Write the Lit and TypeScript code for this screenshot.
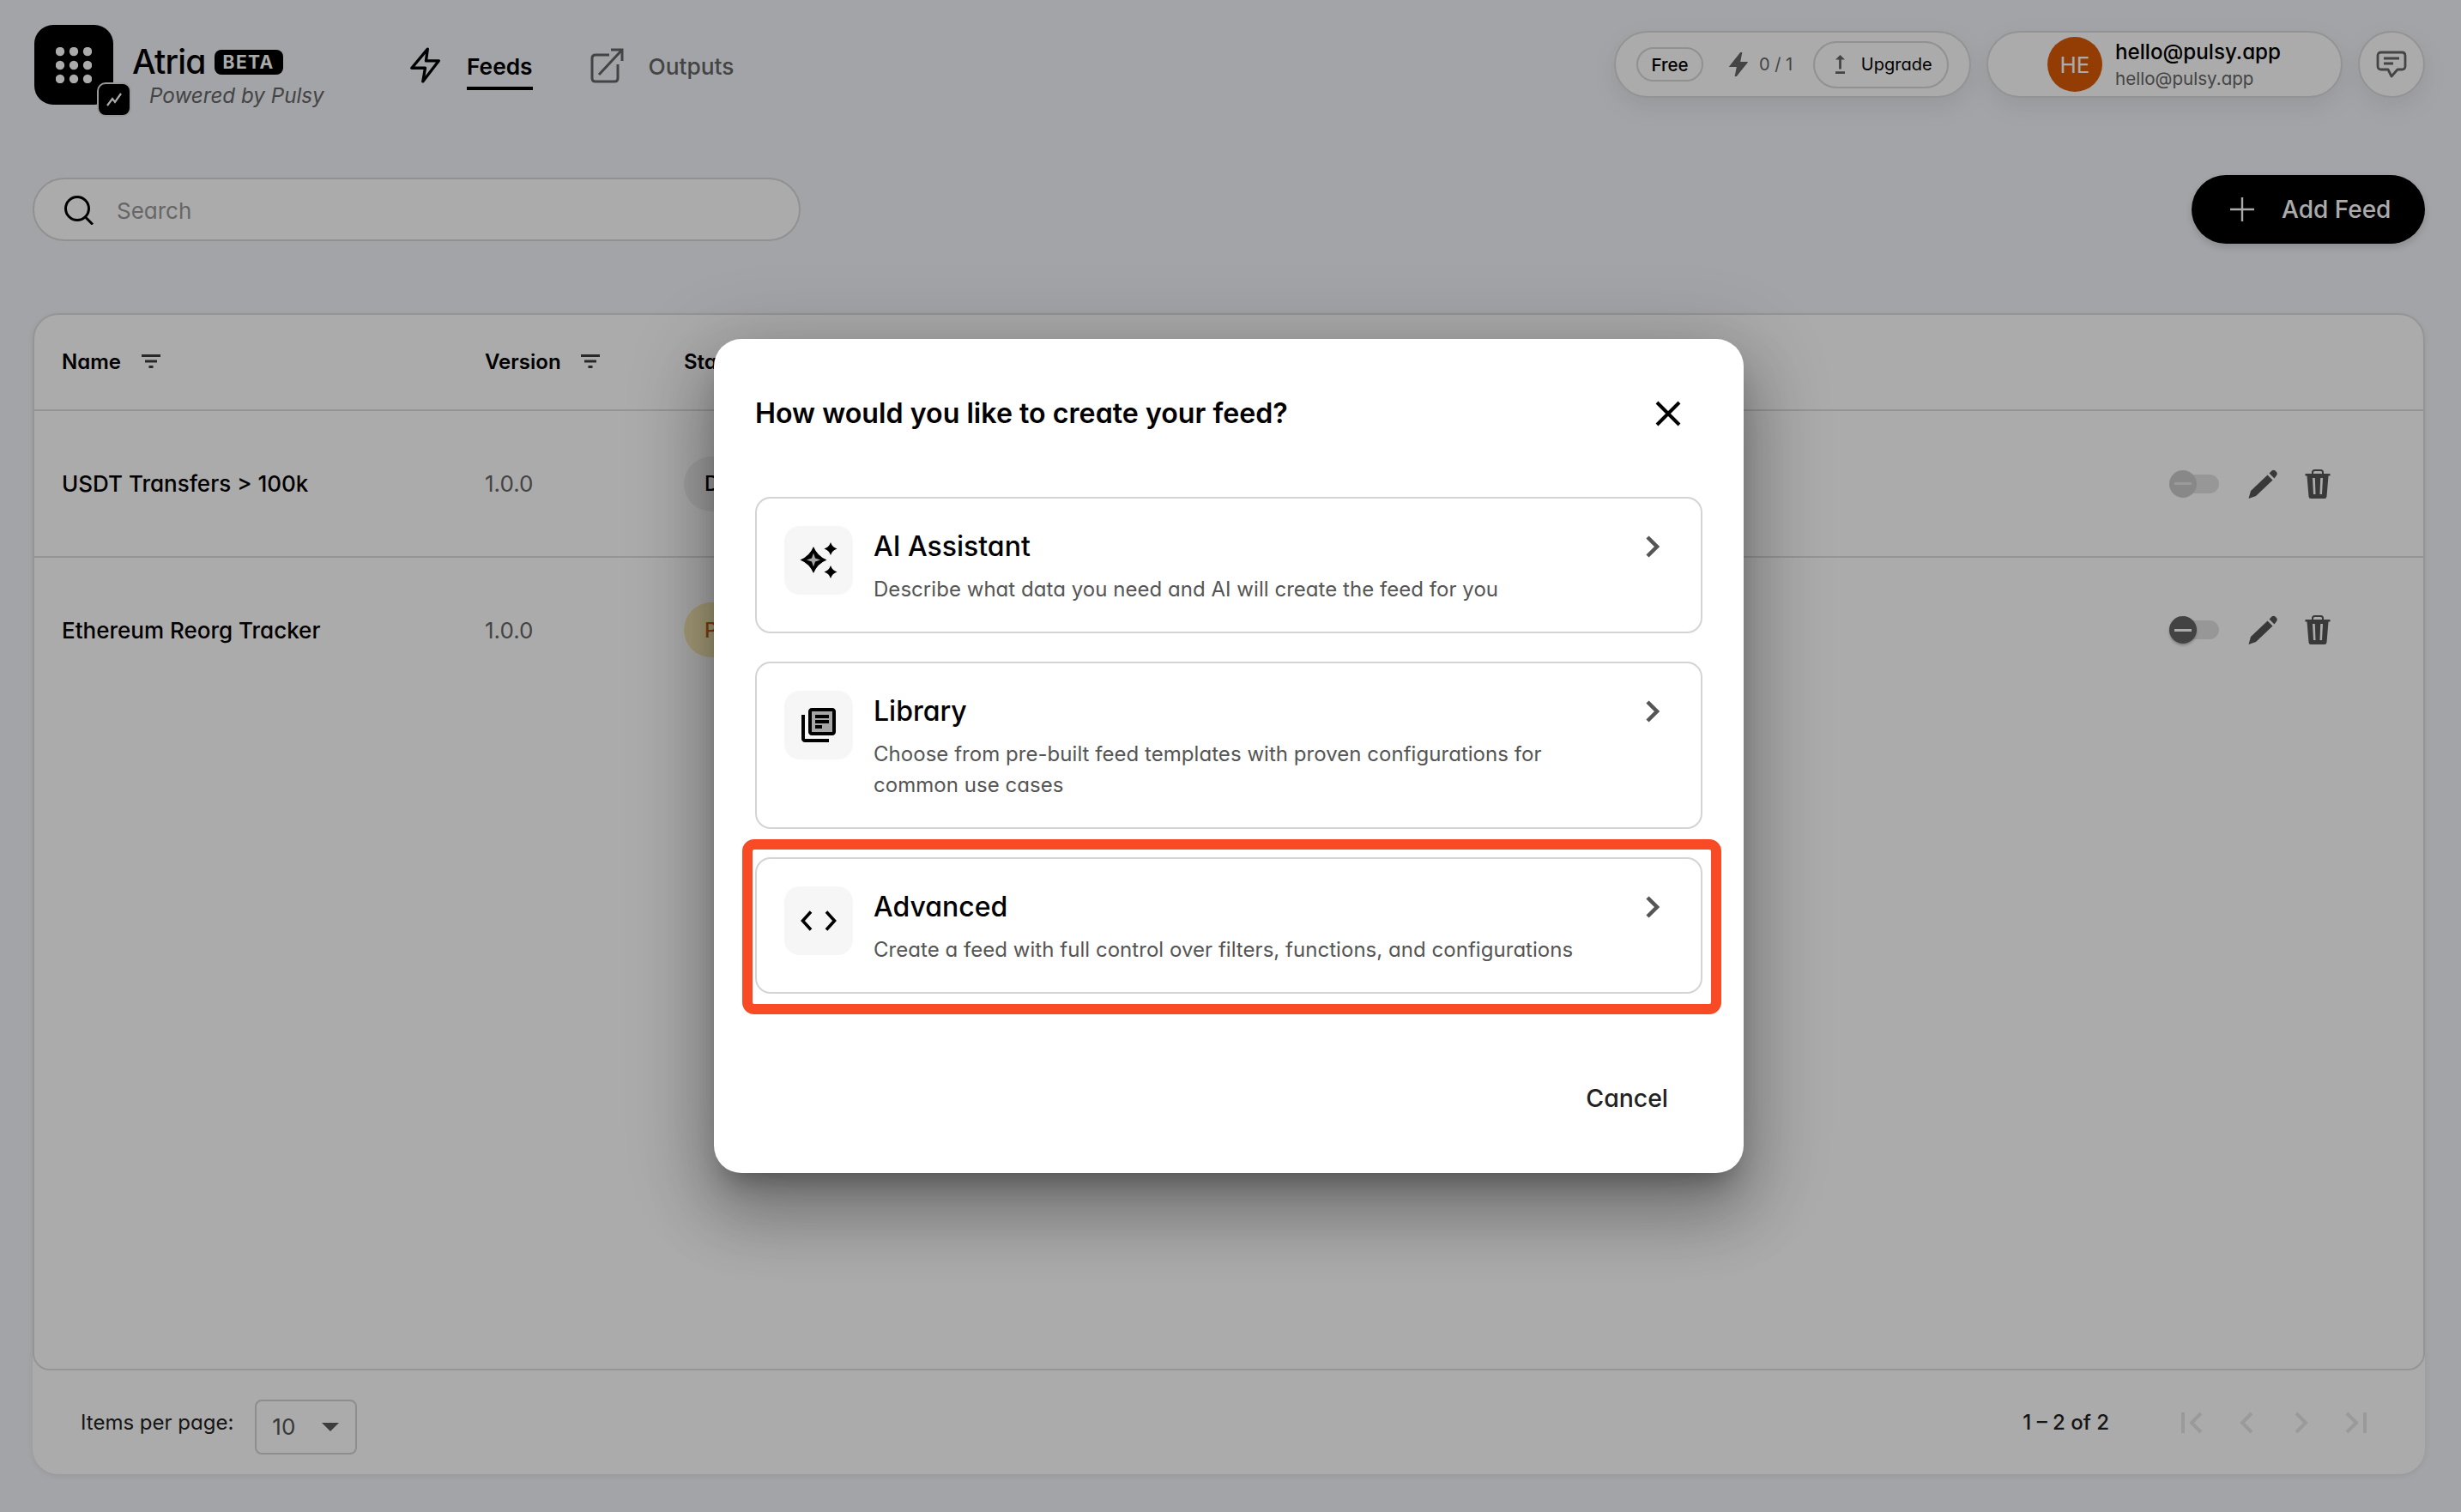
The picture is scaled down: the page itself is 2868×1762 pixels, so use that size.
import { LitElement, html, css, svg } from "lit";
import { customElement } from "lit/decorators.js";

const filterIcon = html`<svg class="filter" width="24" height="16" viewBox="0 0 24 16"><path d="M1 1.5h22M5 8h14M9.5 14.5h5" stroke="#3c3c3c" stroke-width="3"/></svg>`;

const pencilIcon = html`<svg width="34" height="34" viewBox="0 0 34 34"><path d="M0.5 34 L3 25 L22.5 6.5 L28.5 12.5 L9 31 Z" fill="#555"/><path d="M24.5 4.5 L27.5 1.5 Q29.5 0 31.5 1.5 L33 3 Q34.5 5 33 7 L30.5 10.5 Z" fill="#555"/></svg>`;

const trashIcon = html`<svg width="30" height="34" viewBox="0 0 30 34"><path fill-rule="evenodd" fill="#555" d="M0.5 5 H29.5 V7.5 H27.5 L25.5 31.5 Q25.2 34 23 34 H7 Q4.8 34 4.5 31.5 L2.5 7.5 H0.5 Z M9 10 L10 29 H12.5 L11.8 10 Z M18.2 10 L17.5 29 H20 L21 10 Z"/><path d="M9 5 V3.5 Q9 1 11.5 1 H18.5 Q21 1 21 3.5 V5" fill="none" stroke="#555" stroke-width="2"/></svg>`;

const pagerIcons = [
    svg`<path d="M4 2v24M25 3L14 14l11 11" />`,
    svg`<path d="M20 3L9 14l11 11" />`,
    svg`<path d="M8 3l11 11L8 25" />`,
    svg`<path d="M24 2v24M3 3l11 11L3 25" />`,
];

type Feed = { name: string; status: string; kind: string; enabled: boolean };

const feeds: Feed[] = [
    { name: "USDT Transfers > 100k", status: "Draft", kind: "draft", enabled: false },
    { name: "Ethereum Reorg Tracker", status: "Paused", kind: "paused", enabled: true },
];

const options = [
    {
        title: "AI Assistant",
        text: "Describe what data you need and AI will create the feed for you",
        icon: svg`<path d="M18 8 Q22.500 19 33.500 23.500 Q22.500 28 18 39 Q13.500 28 2.500 23.500 Q13.500 19 18 8Z" fill="#000"/><path d="M18 15.500 L20 21.500 L26 23.500 L20 25.500 L18 31.500 L16 25.500 L10 23.500 L16 21.500Z" fill="#a6a6a6"/><path d="M38 3 Q39.800 8.700 45.500 10.500 Q39.800 12.300 38 18 Q36.200 12.300 30.500 10.500 Q36.200 8.700 38 3Z" fill="#000"/><path d="M38 30 Q39.800 35.700 45.500 37.500 Q39.800 39.300 38 45 Q36.200 39.300 30.500 37.500 Q36.200 35.700 38 30Z" fill="#000"/>`,
        highlighted: false,
    },
    {
        title: "Library",
        text: "Choose from pre-built feed templates with proven configurations for common use cases",
        icon: svg`<g transform="scale(2)"><path d="M8 4h12v12H8z" fill="#a6a6a6"/><path d="M4 6H2v14c0 1.1.9 2 2 2h14v-2H4V6zm16-4H8c-1.1 0-2 .9-2 2v12c0 1.1.9 2 2 2h12c1.1 0 2-.9 2-2V4c0-1.1-.9-2-2-2zm0 14H8V4h12v12zM10 9h8v2h-8zm0 3h4v2h-4zm0-6h8v2h-8z" fill="#000"/></g>`,
        highlighted: false,
    },
    {
        title: "Advanced",
        text: "Create a feed with full control over filters, functions, and configurations",
        icon: svg`<path d="M15 13.500 L5.500 24 L15 34.500 M33 13.500 L42.500 24 L33 34.500" fill="none" stroke="#000" stroke-width="3.600"/>`,
        highlighted: true,
    },
];

@customElement("app-root")
export class AppRoot extends LitElement {

    static styles = css`
        :host {
            display: block;
            position: relative;
            width: 2868px;
            height: 1762px;
            overflow: hidden;
            background: #f3f5fb;
            color: #000;
            font-family: Inter, "Noto Sans", sans-serif;
            font-feature-settings: "cv11" 1;
        }
        svg { display: block; flex-shrink: 0; }

        .topbar {
            display: flex;
            align-items: flex-start;
            height: 204px;
            padding: 29px 42px 0 40px;
            box-sizing: border-box;
        }
        .brand { display: flex; width: 438px; flex-shrink: 0; }
        .logo {
            position: relative;
            width: 92px;
            height: 93px;
            border-radius: 22px;
            background: #000;
            flex-shrink: 0;
        }
        .logo .dots { position: absolute; left: 25px; top: 26px; }
        .logo .mini {
            position: absolute;
            left: 73px;
            top: 67px;
            width: 36px;
            height: 36px;
            border: 2px solid #e4e4e4;
            border-radius: 10px;
            background: #000;
            display: flex;
            align-items: center;
            justify-content: center;
        }
        .brand-text { margin-left: 22px; }
        .brand-line { display: flex; align-items: center; height: 32px; margin-top: 27px; gap: 10px; }
        .brand-name { font-size: 39px; font-weight: 500; letter-spacing: -0.8px; line-height: 32px; }
        .beta {
            background: #000;
            color: #fff;
            font-size: 21px;
            font-weight: 700;
            letter-spacing: 1.4px;
            line-height: 29px;
            padding: 0 10px;
            border-radius: 8px;
        }
        .powered {
            margin: 7px 0 0 20px;
            font-size: 24.2px;
            font-style: italic;
            color: #666;
            line-height: 34px;
            white-space: nowrap;
        }
        nav { display: flex; align-items: flex-start; margin-top: 26px; }
        .nav-item {
            display: flex;
            align-items: flex-start;
            font-size: 26.3px;
            color: #666;
            font-weight: 500;
            line-height: 36px;
        }
        .nav-item span { margin-top: 5px; padding-bottom: 5px; border-bottom: 4px solid transparent; }
        .nav-item.active { color: #000; font-weight: 600; }
        .nav-item.active span { border-bottom-color: #000; }
        .nav-item.active svg { margin-right: 30px; }
        .nav-item.outputs { margin-left: 67px; }
        .nav-item.outputs svg { margin-right: 28px; }

        .right { display: flex; gap: 18px; margin: 7px 0 0 auto; }
        .pill {
            height: 78px;
            box-sizing: border-box;
            border: 2px solid #dcdcdc;
            border-radius: 39px;
            background: #fff;
            box-shadow: 0 10px 30px rgba(0, 0, 0, 0.08);
            display: flex;
            align-items: center;
        }
        .plan { width: 416px; padding-left: 24px; font-size: 20px; }
        .chip {
            box-sizing: border-box;
            display: flex;
            align-items: center;
            justify-content: center;
            border: 2px solid #d8d8d8;
            border-radius: 28px;
            font-weight: 500;
        }
        .free { width: 78px; height: 40px; font-size: 20.5px; }
        .quota { color: #666; margin-left: 29px; display: flex; align-items: center; gap: 12px; white-space: nowrap; }
        .upgrade { width: 158px; height: 55px; margin-left: 24px; gap: 19px; padding-left: 6px; font-weight: 400; }
        .user { width: 415px; padding-left: 69px; }
        .avatar {
            width: 64px;
            height: 64px;
            border-radius: 50%;
            background: #db5c07;
            color: #fff;
            font-size: 26px;
            display: flex;
            align-items: center;
            justify-content: center;
        }
        .who { margin-left: 15px; }
        .who b { display: block; font-size: 24.2px; font-weight: 500; line-height: 34px; }
        .who i { display: block; font-style: normal; font-size: 20.6px; color: #666; line-height: 28px; }
        .chat { width: 78px; justify-content: center; }

        .toolbar {
            display: flex;
            align-items: center;
            justify-content: space-between;
            height: 80px;
            padding: 0 42px 0 38px;
        }
        .search {
            box-sizing: border-box;
            width: 895px;
            height: 74px;
            border: 2px solid #d8d8d8;
            border-radius: 37px;
            background: #fff;
            display: flex;
            align-items: center;
            padding: 2px 0 0 35px;
            gap: 27px;
            font-size: 26px;
            color: #999;
        }
        .add {
            display: flex;
            align-items: center;
            box-sizing: border-box;
            width: 272px;
            height: 80px;
            padding-left: 45px;
            gap: 32px;
            border-radius: 40px;
            background: #000;
            color: #fff;
            font-size: 28px;
            font-weight: 500;
            box-shadow: 0 4px 10px rgba(0, 0, 0, 0.15);
        }

        .card {
            margin: 81px 42px 0 38px;
            height: 1353px;
            border-radius: 30px;
            background: #fff;
            box-shadow: 0 2px 6px rgba(0, 0, 0, 0.08);
            display: flex;
            flex-direction: column;
        }
        .table {
            flex: 1;
            border: 2px solid #dedede;
            border-radius: 30px 30px 20px 20px;
        }
        .row { display: flex; align-items: center; padding-left: 32px; border-bottom: 2px solid #dedede; height: 169px; font-size: 26px; font-weight: 500; }
        .row:last-child { border-bottom: none; height: 168px; }
        .row.head { height: 112px; font-size: 24px; font-weight: 600; padding-bottom: 2px; box-sizing: border-box; }
        .col-name { width: 493px; display: flex; align-items: center; gap: 23px; }
        .col-version { width: 232px; display: flex; align-items: center; gap: 22px; }
        .row:not(.head) .col-version { font-weight: 400; color: #666; }
        .status {
            height: 64px;
            padding: 0 24px;
            border-radius: 32px;
            display: flex;
            align-items: center;
            font-size: 24px;
        }
        .status.draft { background: #efefef; }
        .status.paused { background: #f8e9b3; color: #bb5e15; }
        .actions { margin-left: auto; margin-right: 108px; display: flex; align-items: center; gap: 33px; }
        .actions svg:last-child { margin-left: -1px; }
        .actions .toggle { margin-right: 1px; }
        .toggle { position: relative; width: 58px; height: 22px; border-radius: 11px; background: #e2e2e2; }
        .thumb {
            position: absolute;
            left: 0;
            top: -5px;
            width: 32px;
            height: 32px;
            border-radius: 50%;
            background: #cbcbcb;
            display: flex;
            align-items: center;
            justify-content: center;
        }
        .thumb::after { content: ""; width: 20px; height: 3px; background: #e6e6e6; }
        .toggle.on .thumb { background: #646464; box-shadow: 0 2px 3px rgba(0, 0, 0, 0.25); }
        .toggle.on .thumb::after { background: #fff; }

        .footer { height: 121px; flex-shrink: 0; display: flex; align-items: center; padding: 0 48px 0 56px; font-size: 24px; color: #222; }
        .select {
            box-sizing: border-box;
            width: 119px;
            height: 64px;
            margin: 10px 0 0 25px;
            border: 2px solid #d4d4d4;
            border-radius: 8px;
            display: flex;
            align-items: center;
            justify-content: space-between;
            padding: 0 19px 0 18px;
            font-size: 26px;
            color: #555;
        }
        .select::after { content: ""; border: 10px solid transparent; border-top-color: #5c5c5c; border-bottom: none; }
        .range { margin-left: auto; margin-right: 64px; font-weight: 500; }
        .pager { display: flex; }
        .pager svg { width: 64px; fill: none; stroke: #e6e6e6; stroke-width: 4; }

        .overlay {
            position: absolute;
            inset: 0;
            background: rgba(0, 0, 0, 0.33);
            display: flex;
            align-items: center;
            justify-content: center;
            padding-right: 4px;
        }
        .dialog {
            box-sizing: border-box;
            width: 1200px;
            height: 972px;
            padding: 0 48px;
            border-radius: 32px;
            background: #fff;
            box-shadow: 0 22px 30px -14px rgba(0, 0, 0, 0.3), 0 48px 76px 6px rgba(0, 0, 0, 0.2), 0 18px 92px 16px rgba(0, 0, 0, 0.18);
        }
        .dialog-head { box-sizing: border-box; display: flex; align-items: center; justify-content: space-between; height: 184px; padding: 0 25px 10px 0; }
        .dialog-head h2 { margin: 0; font-size: 32.2px; font-weight: 600; line-height: 46px; }
        .option {
            position: relative;
            display: flex;
            align-items: flex-start;
            padding: 32px 48px 32px 32px;
            gap: 24px;
            border: 2px solid #d4d4d4;
            border-radius: 18px;
            margin-bottom: 33px;
        }
        .tile {
            width: 80px;
            height: 80px;
            border-radius: 18px;
            background: #f6f6f6;
            display: flex;
            align-items: center;
            justify-content: center;
            flex-shrink: 0;
        }
        .option-body { flex: 1; margin: 2px 0 -1px; }
        .option-title { font-size: 32px; font-weight: 500; line-height: 44px; }
        .option-text { margin-top: 10px; font-size: 24px; letter-spacing: 0.04px; line-height: 36px; color: #555; max-width: 880px; }
        .chevron { margin-top: 11px; }
        .option.highlighted::after {
            content: "";
            position: absolute;
            left: -17px;
            top: -23px;
            right: -24px;
            bottom: -26px;
            border: 12px solid #f84b25;
            border-radius: 14px;
        }
        .dialog-foot { display: flex; justify-content: flex-end; padding: 67px 40px 0 0; font-size: 28.4px; font-weight: 500; color: #222; line-height: 44px; }
    `;

    render() {
        return html`
            <div class="topbar">
                <div class="brand">
                    <div class="logo">
                        <svg class="dots" width="42" height="42" viewBox="0 0 42 42" fill="#fff">
                            ${[5, 21, 37].flatMap((y) => [5, 21, 37].map((x) => svg`<circle cx=${x} cy=${y} r="5.200"/>`))}
                        </svg>
                        <div class="mini">
                            <svg width="20" height="20" viewBox="0 0 20 20"><path d="M2 17 L8 9 L11 13 L18 3" fill="none" stroke="#fff" stroke-width="2.200"/></svg>
                        </div>
                    </div>
                    <div class="brand-text">
                        <div class="brand-line"><span class="brand-name">Atria</span><span class="beta">BETA</span></div>
                        <div class="powered">Powered by Pulsy</div>
                    </div>
                </div>
                <nav>
                    <div class="nav-item active">
                        <svg width="36" height="42" viewBox="2.500 1 19.500 22.500"><path d="M13.500 2 L3.500 14 h8.500 l-1.500 8.500 L20.500 9.500 h-8 L13.500 2z" fill="none" stroke="#000" stroke-width="1.800" stroke-linejoin="round"/></svg>
                        <span>Feeds</span>
                    </div>
                    <div class="nav-item outputs">
                        <svg width="40" height="42" viewBox="0 0 40 42"><path d="M22 9H6 Q2 9 2 13 V36 Q2 40 6 40 H28 Q32 40 32 36 V20" fill="none" stroke="#666" stroke-width="3"/><path d="M10 32 L37 3 M24 3 H37 V16" fill="none" stroke="#666" stroke-width="3"/></svg>
                        <span>Outputs</span>
                    </div>
                </nav>
                <div class="right">
                    <div class="pill plan">
                        <div class="chip free">Free</div>
                        <div class="quota">
                            <svg width="24" height="28" viewBox="6.500 3 11 18" preserveAspectRatio="none"><path fill="#666" d="M11 21h-1l1-7H7.500c-.58 0-.57-.32-.38-.66.19-.34.05-.08.07-.12C8.480 10.940 10.420 7.540 13 3h1l-1 7h3.500c.49 0 .56.33.47.51l-.07.15C12.960 17.550 11 21 11 21z"/></svg>
                            <span>0 / 1</span>
                        </div>
                        <div class="chip upgrade">
                            <svg width="11" height="22" viewBox="8 4 8 16"><path fill="#666" d="M16 18v2H8v-2h8zM11 7.990V16h2V7.990h3L12 4 8 7.990h3z"/></svg>
                            <span>Upgrade</span>
                        </div>
                    </div>
                    <div class="pill user">
                        <div class="avatar">HE</div>
                        <div class="who"><b>hello@pulsy.app</b><i>hello@pulsy.app</i></div>
                    </div>
                    <div class="pill chat">
                        <svg width="36" height="32" viewBox="0 0 36 32"><path d="M6 2 H30 Q34 2 34 6 V18 Q34 22 30 22 H25 L18 30 L14 22 H6 Q2 22 2 18 V6 Q2 2 6 2Z" fill="none" stroke="#666" stroke-width="2.800" stroke-linejoin="round"/><path d="M9 9 H27 M9 15 H20" stroke="#666" stroke-width="2.800"/></svg>
                    </div>
                </div>
            </div>

            <div class="toolbar">
                <div class="search">
                    <svg width="34" height="34" viewBox="0 0 34 34"><circle cx="15" cy="15" r="13.500" fill="none" stroke="#000" stroke-width="3"/><path d="M24.500 25 L33 33.500" stroke="#000" stroke-width="3"/></svg>
                    <span>Search</span>
                </div>
                <div class="add">
                    <svg width="28" height="28" viewBox="0 0 28 28"><path d="M14 0V28M0 14H28" stroke="#fff" stroke-width="2.400"/></svg>
                    <span>Add Feed</span>
                </div>
            </div>

            <div class="card">
                <div class="table">
                    <div class="row head">
                        <div class="col-name">Name ${filterIcon}</div>
                        <div class="col-version">Version ${filterIcon}</div>
                        <div>Status</div>
                    </div>
                    ${feeds.map((feed) => html`
                        <div class="row">
                            <div class="col-name">${feed.name}</div>
                            <div class="col-version">1.0.0</div>
                            <div class="status ${feed.kind}">${feed.status}</div>
                            <div class="actions">
                                <div class="toggle ${feed.enabled ? "on" : ""}"><div class="thumb"></div></div>
                                ${pencilIcon}
                                ${trashIcon}
                            </div>
                        </div>
                    `)}
                </div>
                <div class="footer">
                    <span>Items per page:</span>
                    <div class="select">10</div>
                    <span class="range">1 – 2 of 2</span>
                    <div class="pager">
                        ${pagerIcons.map((p) => html`<svg height="28" viewBox="-18 0 64 28">${p}</svg>`)}
                    </div>
                </div>
            </div>

            <div class="overlay">
                <div class="dialog">
                    <div class="dialog-head">
                        <h2>How would you like to create your feed?</h2>
                        <svg width="30" height="30" viewBox="0 0 30 30"><path d="M2 2 L28 28 M28 2 L2 28" stroke="#000" stroke-width="4"/></svg>
                    </div>
                    ${options.map((o) => html`
                        <div class="option ${o.highlighted ? "highlighted" : ""}">
                            <div class="tile"><svg width="48" height="48" viewBox="0 0 48 48">${o.icon}</svg></div>
                            <div class="option-body">
                                <div class="option-title">${o.title}</div>
                                <div class="option-text">${o.text}</div>
                            </div>
                            <svg class="chevron" width="16" height="26" viewBox="0 0 16 26"><path d="M2 2 L13 13 L2 24" fill="none" stroke="#555" stroke-width="4.500"/></svg>
                        </div>
                    `)}
                    <div class="dialog-foot">Cancel</div>
                </div>
            </div>
        `;
    }
}
